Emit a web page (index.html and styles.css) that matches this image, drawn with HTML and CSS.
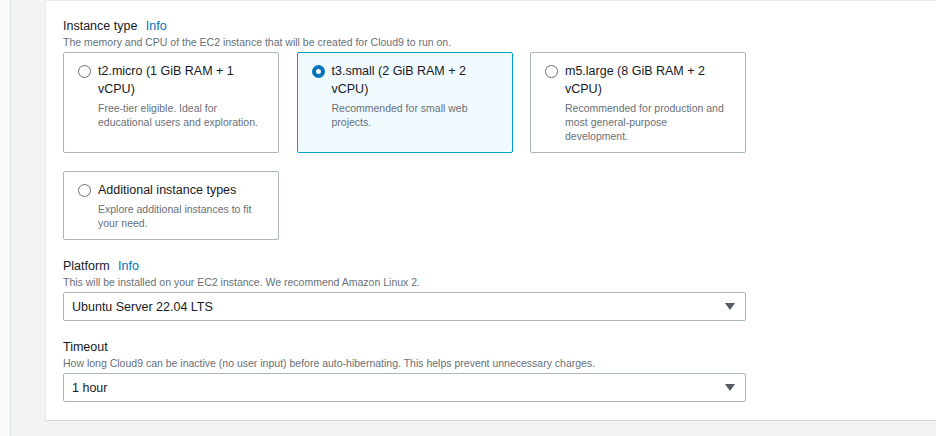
FILE: index.html
```html
<!DOCTYPE html>
<html>
<head>
<meta charset="utf-8">
<link rel="stylesheet" href="styles.css">
</head>
<body>
<div class="shell">
  <div class="rail"></div>
  <main class="panel">
    <div class="form">
      <section class="field">
        <div class="label">Instance type <a class="info">Info</a></div>
        <div class="desc">The memory and CPU of the EC2 instance that will be created for Cloud9 to run on.</div>
        <div class="tiles">
          <div class="tile">
            <span class="radio"></span>
            <div class="tile-body">
              <div class="tile-title">t2.micro (1 GiB RAM + 1 vCPU)</div>
              <div class="tile-desc">Free-tier eligible. Ideal for educational users and exploration.</div>
            </div>
          </div>
          <div class="tile selected">
            <span class="radio checked"></span>
            <div class="tile-body">
              <div class="tile-title">t3.small (2 GiB RAM + 2 vCPU)</div>
              <div class="tile-desc">Recommended for small web projects.</div>
            </div>
          </div>
          <div class="tile">
            <span class="radio"></span>
            <div class="tile-body">
              <div class="tile-title">m5.large (8 GiB RAM + 2 vCPU)</div>
              <div class="tile-desc">Recommended for production and most general-purpose development.</div>
            </div>
          </div>
          <div class="tile">
            <span class="radio"></span>
            <div class="tile-body">
              <div class="tile-title">Additional instance types</div>
              <div class="tile-desc">Explore additional instances to fit your need.</div>
            </div>
          </div>
        </div>
      </section>

      <section class="field">
        <div class="label">Platform <a class="info">Info</a></div>
        <div class="desc">This will be installed on your EC2 instance. We recommend Amazon Linux 2.</div>
        <div class="select"><span>Ubuntu Server 22.04 LTS</span><span class="caret"></span></div>
      </section>

      <section class="field">
        <div class="label">Timeout</div>
        <div class="desc">How long Cloud9 can be inactive (no user input) before auto-hibernating. This helps prevent unnecessary charges.</div>
        <div class="select"><span>1 hour</span><span class="caret"></span></div>
      </section>
    </div>
  </main>
</div>
</body>
</html>
```

FILE: styles.css
```css
* { box-sizing: border-box; }
html, body { margin: 0; padding: 0; }
body {
  background: #f2f3f3;
  font-family: "Liberation Sans", Arial, sans-serif;
  color: #16191f;
  width: 936px;
  height: 436px;
  overflow: hidden;
}
.shell {
  display: flex;
  align-items: flex-start;
}
.rail {
  width: 11px;
  height: 436px;
  background: #f9f9f9;
  border-right: 1px solid #e1e4e4;
  margin-right: 34px;
}
.panel {
  flex: 1;
  background: #fff;
  border-top: 1px solid #eaeded;
  border-left: 1px solid #e4e7e7;
  border-bottom: 1px solid #d5dbdb;
  height: 421px;
  padding: 16px 0 0 17px;
}
.form {
  width: 683px;
  display: flex;
  flex-direction: column;
  gap: 17px;
}
.label {
  font-size: 12.5px;
  line-height: 18px;
}
.info {
  color: #0073bb;
  margin-left: 5px;
}
.desc {
  font-size: 10.5px;
  line-height: 14px;
  color: #687078;
  margin-bottom: 3px;
}
.tiles {
  display: grid;
  grid-template-columns: repeat(3, 216px);
  column-gap: 17.5px;
  row-gap: 18px;
}
.tile {
  display: flex;
  gap: 7px;
  border: 1px solid #aab7b8;
  border-radius: 2px;
  padding: 9px 12px 9px 14px;
}
.tile.selected {
  background: #f1faff;
  border-color: #00a1c9;
}
.radio {
  flex: none;
  width: 13px;
  height: 13px;
  margin-top: 3px;
  border: 1.3px solid #687078;
  border-radius: 50%;
  background: #fff;
}
.radio.checked {
  border: 4px solid #0073bb;
  background: #fff;
}
.tile-title {
  font-size: 12.5px;
  line-height: 18px;
}
.tile-desc {
  font-size: 10.5px;
  line-height: 14px;
  color: #687078;
  margin-top: 3px;
}
.select {
  height: 29px;
  border: 1px solid #aab7b8;
  border-radius: 2px;
  display: flex;
  align-items: center;
  justify-content: space-between;
  padding: 0 10px 0 8px;
  font-size: 12.5px;
}
.caret {
  width: 0;
  height: 0;
  border-left: 5px solid transparent;
  border-right: 5px solid transparent;
  border-top: 7px solid #545b64;
}
```
